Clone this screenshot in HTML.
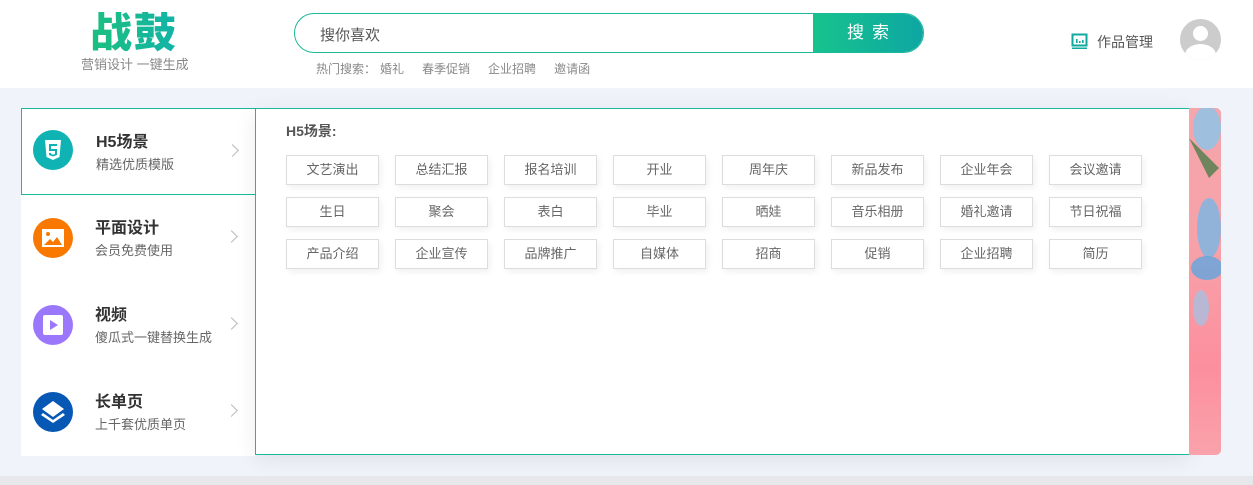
<!DOCTYPE html>
<html><head><meta charset="utf-8"><style>
*{margin:0;padding:0;box-sizing:border-box}
body{width:1253px;height:485px;overflow:hidden;background:#f0f3fa;font-family:"Liberation Sans","Noto Sans CJK SC",sans-serif;position:relative}
.hdr{position:absolute;left:0;top:0;width:1253px;height:88px;background:#fff}
.logo{position:absolute;left:90px;top:12px;font-size:42px;line-height:42px;font-weight:900;background:linear-gradient(90deg,#1cbf7e,#12b3a8);-webkit-background-clip:text;color:transparent;letter-spacing:2px}
.sub{position:absolute;left:81px;top:54px;font-size:13px;color:#888}
.search{position:absolute;left:294px;top:13px;width:630px;height:40px;border:1px solid #19b99a;border-radius:20px;overflow:hidden}
.search span{position:absolute;left:25px;top:10px;font-size:15px;color:#555}
.btn{position:absolute;right:0;top:0;width:110px;height:38px;background:linear-gradient(90deg,#17c38d,#0ea6a3);color:#fff;font-size:17px;text-align:center;line-height:38px;letter-spacing:8px;text-indent:8px}
.hot{position:absolute;left:316px;top:60px;font-size:12px;color:#888;white-space:nowrap}
.hot i{font-style:normal;margin-left:18px}
.mgr{position:absolute;left:1097px;top:32px;font-size:14px;color:#555}
.av{position:absolute;left:1180px;top:19px;width:41px;height:41px;border-radius:50%;background:#ccc;overflow:hidden}
.menu{position:absolute;left:21px;top:108px;width:235px;height:348px;background:#fff}
.it{position:absolute;left:0;width:235px;height:87px}
.it.a{border:1px solid #19b99a;border-right:none;width:236px}
.ic{position:absolute;left:12px;top:23px;width:40px;height:40px;border-radius:50%}
.t{position:absolute;left:74px;top:19px;font-size:16px;font-weight:bold;color:#333}
.d{position:absolute;left:74px;top:45px;font-size:13px;color:#666}
.ar{position:absolute;left:206px;top:37px;width:9px;height:9px;border-top:1px solid #bbb;border-right:1px solid #bbb;transform:rotate(45deg)}
.panel{position:absolute;left:255px;top:108px;width:935px;height:347px;background:#fff;border:1px solid #19b99a;box-shadow:0 4px 20px rgba(0,0,0,.08)}
.pt{position:absolute;left:30px;top:12px;font-size:14px;font-weight:bold;color:#555}
.tag{position:absolute;width:93px;height:30px;border:1px solid #ddd;font-size:13px;color:#666;text-align:center;line-height:28px;box-shadow:2px 3px 6px rgba(0,0,0,.06)}
.img{position:absolute;left:1189px;top:108px;width:32px;height:347px;border-radius:0 5px 5px 0;overflow:hidden;background:linear-gradient(180deg,#f4a6ab 0%,#f7a1a8 40%,#fc8f9d 75%,#f9a2ab 100%)}
.bot{position:absolute;left:0;top:476px;width:1253px;height:9px;background:#e6e8ec}
</style></head><body>
<div class="hdr">
<div class="logo">战鼓</div>
<div class="sub">营销设计 一键生成</div>
<div class="search"><span>搜你喜欢</span><div class="btn">搜索</div></div>
<div class="hot">热门搜索：<i style="margin-left:4px">婚礼</i><i>春季促销</i><i>企业招聘</i><i>邀请函</i></div>
<svg style="position:absolute;left:1071px;top:33px" width="17" height="17" viewBox="0 0 17 17"><rect x="1.5" y="1.5" width="14" height="11" fill="none" stroke="#12a9a0" stroke-width="2"/><rect x="1" y="14.5" width="15" height="1.5" fill="#12a9a0"/><rect x="5" y="6" width="1.6" height="4" fill="#12a9a0"/><rect x="8" y="8" width="1.6" height="2" fill="#12a9a0"/><rect x="11" y="7" width="1.6" height="3" fill="#12a9a0"/></svg>
<div class="mgr">作品管理</div>
<div class="av"><div style="position:absolute;left:13px;top:7px;width:15px;height:15px;border-radius:50%;background:#fff"></div><div style="position:absolute;left:5px;top:25px;width:31px;height:22px;border-radius:50%;background:#fff"></div></div>
</div>
<div class="menu">
<div class="it a" style="top:0"><div class="ic" style="background:#0fb3b3;left:11px;top:21px"><svg width="40" height="40" viewBox="0 0 40 40"><path d="M12 10h16l-1.5 17L20 30l-6.5-3z" fill="#fff"/><path d="M16 14h8v2h-6v3h6v6l-4 1.5-4-1.5v-2h2v1l2 .6 2-.6v-3h-6z" fill="#0fb3b3"/></svg></div><div class="t">H5场景</div><div class="d">精选优质模版</div><div class="ar"></div></div>
<div class="it" style="top:87px"><div class="ic" style="background:#f97800"><svg width="40" height="40" viewBox="0 0 40 40"><rect x="9" y="11" width="22" height="18" fill="#fff"/><circle cx="15" cy="16" r="2" fill="#f97800"/><path d="M11 27l6-6 3 3 4-5 5 8z" fill="#f97800"/></svg></div><div class="t">平面设计</div><div class="d">会员免费使用</div><div class="ar"></div></div>
<div class="it" style="top:174px"><div class="ic" style="background:#9b78fb"><svg width="40" height="40" viewBox="0 0 40 40"><rect x="10" y="10" width="20" height="20" rx="2" fill="#fff"/><path d="M17 15v10l8-5z" fill="#9b78fb"/></svg></div><div class="t">视频</div><div class="d">傻瓜式一键替换生成</div><div class="ar"></div></div>
<div class="it" style="top:261px"><div class="ic" style="background:#0757b5"><svg width="40" height="40" viewBox="0 0 40 40"><path d="M20 9l11 8-11 8-11-8z" fill="#fff"/><path d="M10 21l10 7 10-7 2 2-12 8-12-8z" fill="#fff"/></svg></div><div class="t">长单页</div><div class="d">上千套优质单页</div><div class="ar"></div></div>
</div>
<div class="panel"><div class="pt">H5场景:</div>
<div class="tag" style="left:30px;top:46px">文艺演出</div><div class="tag" style="left:139px;top:46px">总结汇报</div><div class="tag" style="left:248px;top:46px">报名培训</div><div class="tag" style="left:357px;top:46px">开业</div><div class="tag" style="left:466px;top:46px">周年庆</div><div class="tag" style="left:575px;top:46px">新品发布</div><div class="tag" style="left:684px;top:46px">企业年会</div><div class="tag" style="left:793px;top:46px">会议邀请</div>
<div class="tag" style="left:30px;top:88px">生日</div><div class="tag" style="left:139px;top:88px">聚会</div><div class="tag" style="left:248px;top:88px">表白</div><div class="tag" style="left:357px;top:88px">毕业</div><div class="tag" style="left:466px;top:88px">晒娃</div><div class="tag" style="left:575px;top:88px">音乐相册</div><div class="tag" style="left:684px;top:88px">婚礼邀请</div><div class="tag" style="left:793px;top:88px">节日祝福</div>
<div class="tag" style="left:30px;top:130px">产品介绍</div><div class="tag" style="left:139px;top:130px">企业宣传</div><div class="tag" style="left:248px;top:130px">品牌推广</div><div class="tag" style="left:357px;top:130px">自媒体</div><div class="tag" style="left:466px;top:130px">招商</div><div class="tag" style="left:575px;top:130px">促销</div><div class="tag" style="left:684px;top:130px">企业招聘</div><div class="tag" style="left:793px;top:130px">简历</div>
</div>
<div class="img"><svg width="32" height="347" viewBox="0 0 32 347"><ellipse cx="18" cy="20" rx="14" ry="22" fill="#8ec3e6" opacity=".85"/><path d="M0 30 L20 70 L30 60 Z" fill="#4f7d4a" opacity=".8"/><ellipse cx="20" cy="120" rx="12" ry="30" fill="#7fb6e3" opacity=".85"/><ellipse cx="18" cy="160" rx="16" ry="12" fill="#6aa6dc" opacity=".85"/><ellipse cx="12" cy="200" rx="8" ry="18" fill="#9cc5e8" opacity=".7"/></svg></div>
<div class="bot"></div>
</body></html>
